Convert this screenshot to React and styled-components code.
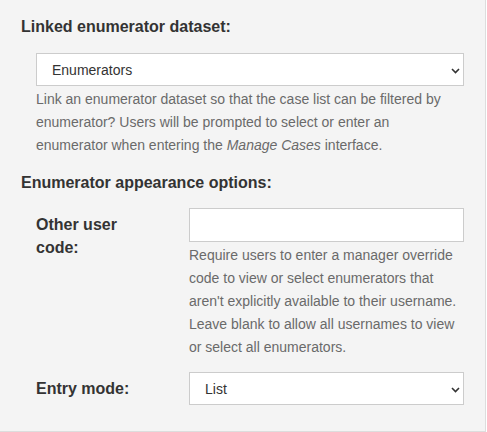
import styled, { createGlobalStyle } from "styled-components";

const GlobalStyle = createGlobalStyle`
  html, body {
    margin: 0;
    padding: 0;
    background: #ffffff;
  }
  body {
    font-family: "Liberation Sans", Arial, sans-serif;
  }
`;

const Panel = styled.div`
  width: 486px;
  height: 432px;
  box-sizing: border-box;
  background: #f4f4f4;
  border-right: 1px solid #dddddd;
  border-bottom: 1px solid #dddddd;
  padding: 17px 21px 0 21px;
  color: #333333;
`;

const Heading = styled.h3`
  margin: ${(p) => p.$top || 0}px 0 0 0;
  font-size: 16px;
  line-height: 20px;
  font-weight: bold;
  color: #333333;
`;

const Indented = styled.div`
  margin: 16px 0 0 15px;
`;

const SelectWrap = styled.div`
  position: relative;
  width: 100%;
`;

const Select = styled.select`
  appearance: none;
  -webkit-appearance: none;
  width: 100%;
  height: 33px;
  box-sizing: border-box;
  border: 1px solid #cccccc;
  border-radius: 0;
  background: #ffffff;
  padding: 0 30px 0 15px;
  font-family: "Liberation Sans", Arial, sans-serif;
  font-size: 14px;
  color: #333333;
  outline: none;
`;

const Chevron = styled.svg`
  position: absolute;
  right: 4px;
  top: 15px;
  width: 9px;
  height: 6px;
  pointer-events: none;
`;

const Input = styled.input`
  display: block;
  width: 100%;
  height: 34px;
  box-sizing: border-box;
  border: 1px solid #cccccc;
  border-radius: 0;
  background: #ffffff;
  padding: 0 10px;
  font-family: "Liberation Sans", Arial, sans-serif;
  font-size: 14px;
  outline: none;
`;

const Help = styled.p`
  margin: 2px 0 0 0;
  font-size: 14px;
  line-height: 23px;
  color: #6a6a6a;
`;

const Row = styled.div`
  display: grid;
  grid-template-columns: 153px 1fr;
  align-items: ${(p) => (p.$center ? "center" : "start")};
  margin: ${(p) => p.$top}px 0 0 15px;
`;

const Label = styled.label`
  font-size: 16px;
  line-height: 23px;
  font-weight: bold;
  color: #333333;
  padding-top: ${(p) => p.$pad || 0}px;
  padding-right: 36px;
`;

const Dropdown = ({ value }) => (
  <SelectWrap>
    <Select defaultValue={value}>
      <option>{value}</option>
    </Select>
    <Chevron viewBox="0 0 9 6">
      <path d="M1 1 L4.5 4.5 L8 1" fill="none" stroke="#333" strokeWidth="1.6" />
    </Chevron>
  </SelectWrap>
);

export default function App() {
  return (
    <>
      <GlobalStyle />
      <Panel>
        <Heading>Linked enumerator dataset:</Heading>
        <Indented>
          <Dropdown value="Enumerators" />
          <Help>
            Link an enumerator dataset so that the case list can be filtered by
            enumerator? Users will be prompted to select or enter an enumerator
            when entering the <i>Manage Cases</i> interface.
          </Help>
        </Indented>
        <Heading $top={16}>Enumerator appearance options:</Heading>
        <Row $top={15}>
          <Label $pad={5}>Other user code:</Label>
          <div>
            <Input type="text" />
            <Help>
              Require users to enter a manager override code to view or select
              enumerators that aren't explicitly available to their username.
              Leave blank to allow all usernames to view or select all
              enumerators.
            </Help>
          </div>
        </Row>
        <Row $top={13} $center>
          <Label>Entry mode:</Label>
          <Dropdown value="List" />
        </Row>
      </Panel>
    </>
  );
}
